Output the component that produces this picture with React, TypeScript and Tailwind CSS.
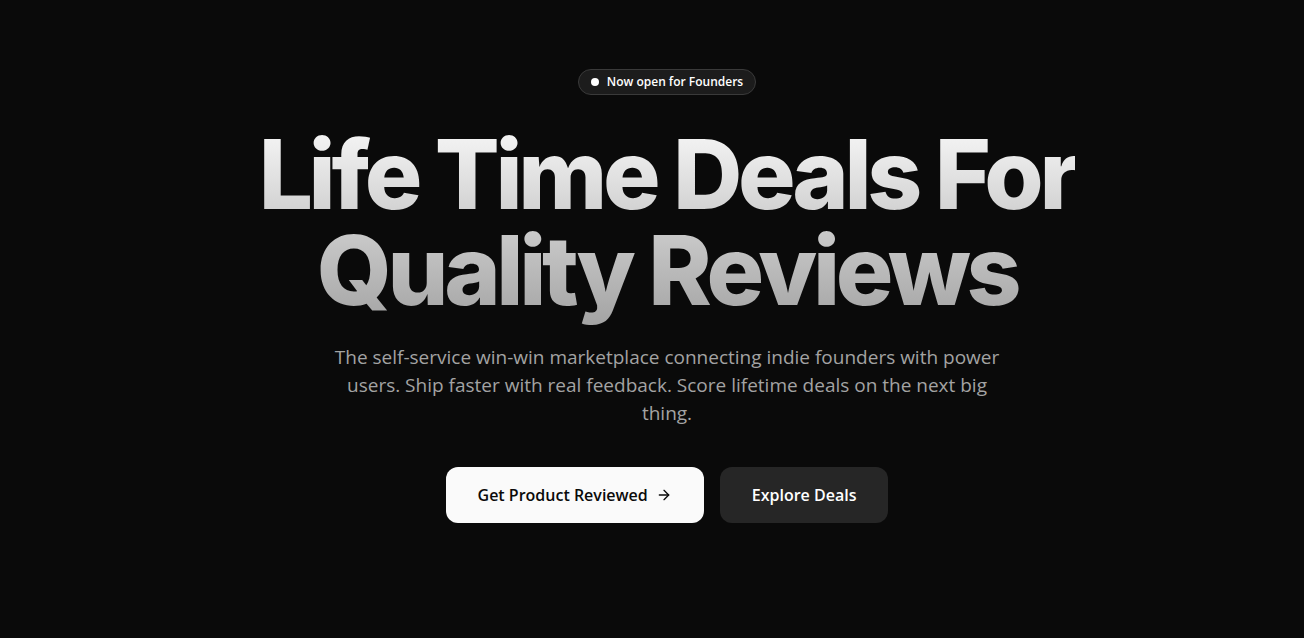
import { ArrowRight } from 'lucide-react';

export default function App() {
  return (
    <main
      className="min-h-screen w-full bg-[#0a0a0a] text-white"
      style={{ fontFamily: '"Open Sans", "Noto Sans", sans-serif' }}
    >
      <section className="flex flex-col items-center pt-[69px] pl-[30px] text-center">
        <div className="flex h-[26px] items-center gap-2 rounded-full border border-[#3a3a3a] bg-[#1c1c1c] px-3 text-xs font-semibold text-white">
          <span className="h-2 w-2 rounded-full bg-white" />
          Now open for Founders
        </div>

        <h1
          className="mt-[31px] bg-gradient-to-b from-[#f7f7f7] to-[#a3a3a3] bg-clip-text pb-2 text-8xl leading-[96px] font-extrabold tracking-[-0.045em] text-transparent"
          style={{ fontFamily: 'Inter, "Noto Sans", sans-serif' }}
        >
          Life Time Deals For
          <br />
          Quality Reviews
        </h1>

        <p className="mt-[17px] max-w-2xl text-[19px] leading-7 text-[#a3a3a3]">
          The self-service win-win marketplace connecting indie founders with power users. Ship faster with
          real feedback. Score lifetime deals on the next big thing.
        </p>

        <div className="mt-10 flex items-center gap-4">
          <button className="flex h-14 items-center gap-2 rounded-xl bg-[#fafafa] px-8 text-base font-semibold text-[#0a0a0a]">
            Get Product Reviewed
            <ArrowRight className="h-4 w-4" strokeWidth={2} />
          </button>
          <button className="flex h-14 items-center rounded-xl bg-[#262626] px-8 text-base font-semibold text-white">
            Explore Deals
          </button>
        </div>
      </section>
    </main>
  );
}
